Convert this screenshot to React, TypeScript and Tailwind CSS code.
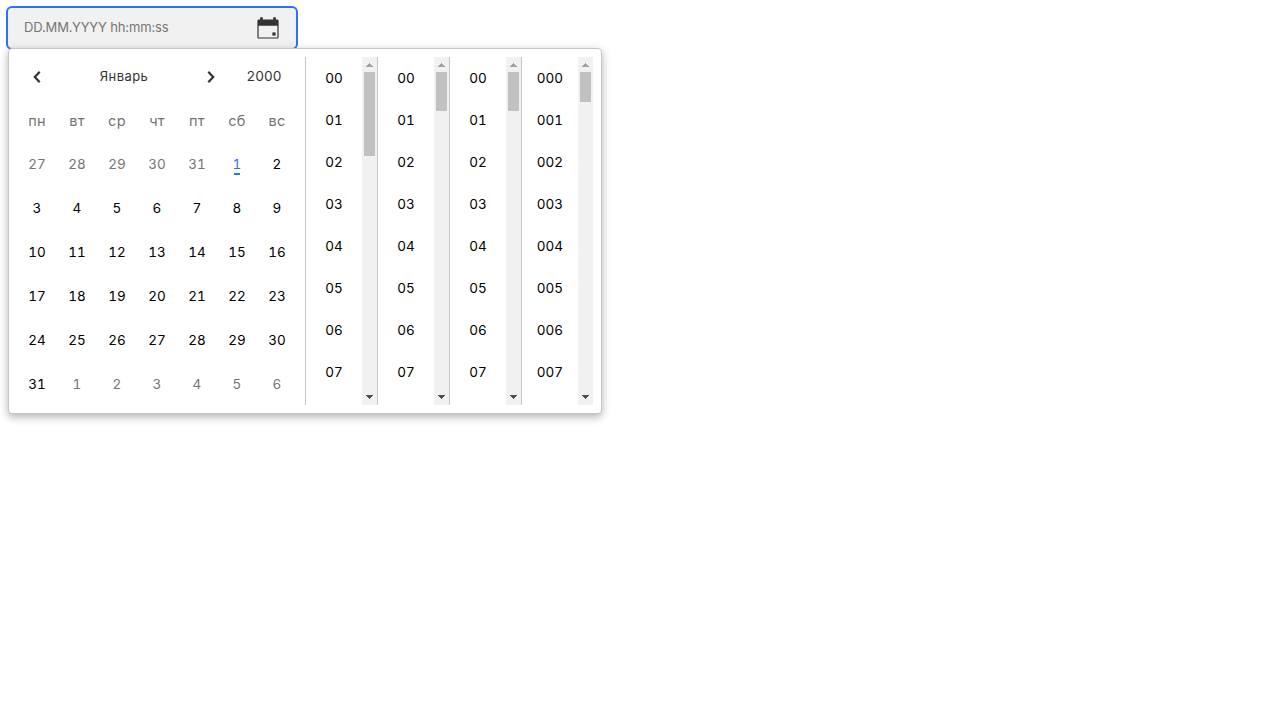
import React from "react";

const weekdays = ["пн", "вт", "ср", "чт", "пт", "сб", "вс"];

const days = [
  27, 28, 29, 30, 31, 1, 2, 3, 4, 5, 6, 7, 8, 9, 10, 11, 12, 13, 14, 15, 16, 17, 18, 19, 20, 21, 22, 23, 24, 25, 26,
  27, 28, 29, 30, 31, 1, 2, 3, 4, 5, 6,
];

const columns = [
  { digits: 2, thumb: "h-[84px]", border: true },
  { digits: 2, thumb: "h-[39px]", border: true },
  { digits: 2, thumb: "h-[39px]", border: true },
  { digits: 3, thumb: "h-[30px]", border: false },
];

function Digits({ value }: { value: string }) {
  return <span className="text-[13.5px] whitespace-nowrap tabular-nums">{value}</span>;
}

function CalendarIcon() {
  return (
    <svg width="24" height="24" viewBox="0 0 24 24" className="block">
      <path
        fill="#333"
        fillRule="evenodd"
        d="M4.2 1.2h2.6v2.4h10.4V1.2h2.6v2.4h1.4c.8 0 1.4.6 1.4 1.4v16.2c0 .8-.6 1.4-1.4 1.4H2.8c-.8 0-1.4-.6-1.4-1.4V5c0-.8.6-1.4 1.4-1.4h1.4zM2.6 9.8v11.6h18.8V9.8z"
      />
      <path fill="#333" d="M16.4 16.4h3.2v3.2h-3.2z" />
    </svg>
  );
}

function Chevron({ d }: { d: string }) {
  return (
    <svg width="16" height="16" viewBox="0 0 16 16" className="block">
      <path d={d} fill="none" stroke="#333" strokeWidth="2.2" />
    </svg>
  );
}

function TimeColumn({ digits, thumb, border }: { digits: number; thumb: string; border: boolean }) {
  return (
    <div className={`flex h-[348px] ${border ? "border-r border-[#c6c6c6]" : ""}`}>
      <div className="h-full w-14 overflow-hidden">
        {Array.from({ length: 8 }, (_, i) => (
          <div key={i} className="flex h-[42px] items-center justify-center pt-[2px]">
            <Digits value={String(i).padStart(digits, "0")} />
          </div>
        ))}
      </div>
      <div className="flex h-full w-[15px] flex-col items-center bg-[#f1f1f1]">
        <svg width="15" height="15" viewBox="0 0 15 15" className="block shrink-0" shapeRendering="crispEdges">
          <path fill="#a3a3a3" d="M7 6h1v1h1v1h1v1h1v1H4V9h1V8h1V7h1z" />
        </svg>
        <div className={`w-[11px] bg-[#c1c1c1] ${thumb}`} />
        <svg width="15" height="15" viewBox="0 0 15 15" className="mt-auto block shrink-0" shapeRendering="crispEdges">
          <path fill="#505050" d="M4 5h7v1h-1v1H9v1H8v1H7V8H6V7H5V6H4z" />
        </svg>
      </div>
    </div>
  );
}

export default function App() {
  return (
    <div className="min-h-screen bg-white p-1.5 font-['Inter','Liberation_Sans',sans-serif] text-sm text-black">
      <div className="relative w-[292px]">
        <div className="flex h-11 items-center justify-between rounded-[6px] border-2 border-[#2a72f8] bg-[#f1f1f1] pr-4 pl-4">
          <span className="pb-px text-[13px] tracking-[-0.13px] text-[#757575]">DD.MM.YYYY hh:mm:ss</span>
          <CalendarIcon />
        </div>
        <div className="absolute top-[42px] left-[2px] flex h-[366px] w-[594px] rounded-[4px] border border-[#c6c6c6] bg-white p-2 shadow-[0_3px_8px_rgba(0,0,0,0.3)]">
          <div className="w-[280px]">
            <div className="flex h-10 items-center text-[#333]">
              <div className="flex w-10 justify-center">
                <Chevron d="M10.7 2.8 5.8 8l4.9 5.2" />
              </div>
              <div className="w-[134px] pb-px text-center text-[13px] tracking-[0.4px]">Январь</div>
              <div className="flex w-10 justify-center">
                <Chevron d="M5.3 2.8 10.2 8l-4.9 5.2" />
              </div>
              <div className="w-[66px] pb-px text-center">
                <Digits value="2000" />
              </div>
            </div>
            <div className="mt-[2px] grid grid-cols-7 text-[#757575]">
              {weekdays.map((d) => (
                <div key={d} className="flex h-11 items-center justify-center text-[14.5px] tracking-[0.3px]">
                  {d}
                </div>
              ))}
            </div>
            <div className="grid grid-cols-7">
              {days.map((d, i) => (
                <div
                  key={i}
                  className={`relative flex h-11 items-center justify-center ${
                    i === 5 ? "text-[#2a72f8]" : i < 5 || i > 35 ? "text-[#757575]" : ""
                  }`}
                >
                  <Digits value={String(d)} />
                  {i === 5 && <span className="absolute top-[30px] left-[17px] h-[2px] w-[6px] bg-[#2a72f8]" />}
                </div>
              ))}
            </div>
          </div>
          <div className="ml-2 flex h-[348px] border-l border-[#c6c6c6]">
            {columns.map((c, i) => (
              <TimeColumn key={i} {...c} />
            ))}
          </div>
        </div>
      </div>
    </div>
  );
}
